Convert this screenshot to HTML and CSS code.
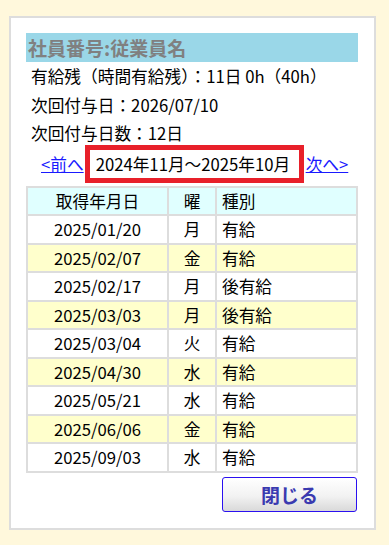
FILE: index.html
```html
<!DOCTYPE html>
<html>
<head>
    <meta charset="utf-8">
    <title>有給取得履歴</title>
    <link rel="stylesheet" href="styles.css">
</head>
<body>
    <div class="panel">
        <div class="panel-title">社員番号:従業員名</div>
        <div class="info-line">有給残（時間有給残）：11日 0h（40h）</div>
        <div class="info-line">次回付与日：2026/07/10</div>
        <div class="info-line">次回付与日数：12日</div>

        <div class="period-nav">
            <a href="#" class="nav-link">&lt;前へ</a>
            <span class="period">2024年11月～2025年10月</span>
            <a href="#" class="nav-link">次へ&gt;</a>
        </div>

        <table class="history">
            <tr>
                <th class="col-date">取得年月日</th>
                <th class="col-week">曜</th>
                <th class="col-kind">種別</th>
            </tr>
            <tr><td class="col-date">2025/01/20</td><td class="col-week">月</td><td class="col-kind">有給</td></tr>
            <tr class="alt"><td class="col-date">2025/02/07</td><td class="col-week">金</td><td class="col-kind">有給</td></tr>
            <tr><td class="col-date">2025/02/17</td><td class="col-week">月</td><td class="col-kind">後有給</td></tr>
            <tr class="alt"><td class="col-date">2025/03/03</td><td class="col-week">月</td><td class="col-kind">後有給</td></tr>
            <tr><td class="col-date">2025/03/04</td><td class="col-week">火</td><td class="col-kind">有給</td></tr>
            <tr class="alt"><td class="col-date">2025/04/30</td><td class="col-week">水</td><td class="col-kind">有給</td></tr>
            <tr><td class="col-date">2025/05/21</td><td class="col-week">水</td><td class="col-kind">有給</td></tr>
            <tr class="alt"><td class="col-date">2025/06/06</td><td class="col-week">金</td><td class="col-kind">有給</td></tr>
            <tr><td class="col-date">2025/09/03</td><td class="col-week">水</td><td class="col-kind">有給</td></tr>
        </table>

        <div class="actions">
            <button class="close-button">閉じる</button>
        </div>
    </div>
</body>
</html>
```

FILE: styles.css
```css
body {
    margin: 0;
    padding: 16px 0 0 9px;
    background-color: #fff8dc;
    font-family: "Noto Sans CJK JP", "Noto Sans", sans-serif;
    font-size: 16.7px;
    color: #000;
}
.panel {
    width: 367px;
    box-sizing: border-box;
    background-color: #fff;
    border: 2px solid #dddddd;
    padding: 15px 16px 16px 15px;
}
.panel-title {
    height: 29px;
    line-height: 29px;
    background-color: #9ad7e8;
    color: #808080;
    font-size: 19px;
    font-weight: bold;
    padding-left: 2px;
}
.info-line {
    line-height: 28.5px;
    padding-left: 5px;
    white-space: nowrap;
}
.period-nav {
    display: flex;
    align-items: center;
    margin-top: -3px;
    padding-left: 15px;
    white-space: nowrap;
}
.nav-link {
    color: #1a1aff;
    text-decoration: underline;
}
.period {
    display: inline-block;
    width: 219px;
    height: 38px;
    box-sizing: border-box;
    border: 5px solid #e8202a;
    line-height: 28px;
    padding-left: 6px;
    margin-left: 1px;
}
.period-nav .nav-link:last-child {
    margin-left: 2px;
}
.history {
    width: 332px;
    margin-top: 3px;
    border-collapse: separate;
    border-spacing: 2px;
    background-color: #dddddd;
}
.history th,
.history td {
    background-color: #fff;
    font-weight: normal;
    line-height: 24.5px;
    padding: 1px 5px;
}
.history th {
    background-color: #e0ffff;
}
.history tr.alt td {
    background-color: #ffffcc;
}
.col-date {
    width: 129px;
    text-align: center;
}
.col-week {
    width: 36px;
    text-align: center;
}
.col-kind {
    text-align: left;
}
.actions {
    display: flex;
    justify-content: flex-end;
    margin-top: 4px;
    padding-right: 1px;
}
.close-button {
    width: 135px;
    height: 35px;
    border: 1.5px solid #2a10f0;
    border-radius: 3px;
    background: linear-gradient(#ffffff, #f2f2f2 55%, #d9d9d9);
    color: #3a3ab0;
    font-family: "Noto Sans CJK JP", sans-serif;
    font-size: 19px;
    font-weight: bold;
    cursor: pointer;
    padding: 0;
}
```
